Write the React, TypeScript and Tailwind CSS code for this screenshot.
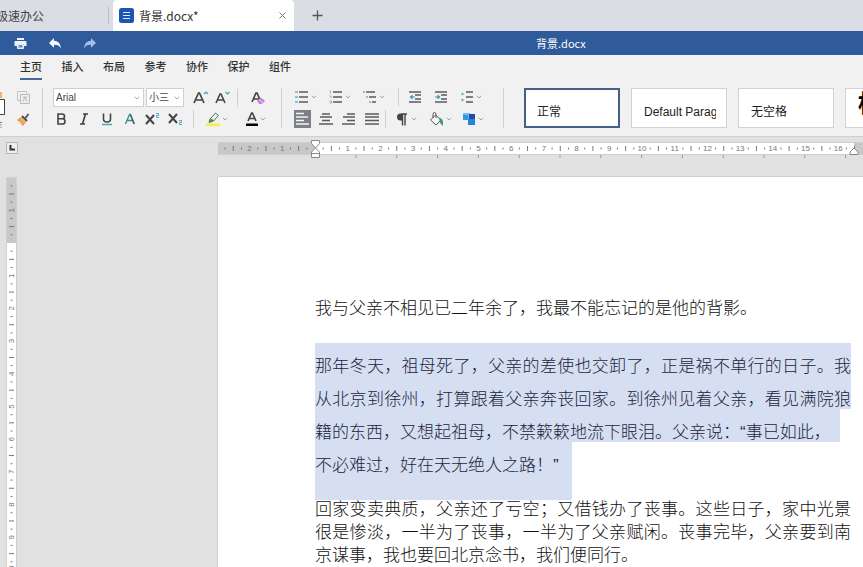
import clsx from "clsx";
import React from "react";

const CM = 32.7;

const menus = ["主页", "插入", "布局", "参考", "协作", "保护", "组件"];

const styleCards = [
  { name: "正常", active: true },
  { name: "Default Paragraph", active: false },
  { name: "无空格", active: false },
];

const Icon = ({
  w = 16,
  h = 16,
  children,
}: {
  w?: number;
  h?: number;
  children: React.ReactNode;
}) => (
  <svg width={w} height={h} viewBox={`0 0 ${w} ${h}`} fill="none" aria-hidden="true">
    {children}
  </svg>
);

const Tool = ({
  label,
  className,
  children,
}: {
  label: string;
  className?: string;
  children: React.ReactNode;
}) => (
  <button
    type="button"
    aria-label={label}
    className={clsx("flex h-[18px] shrink-0 items-center", className)}
  >
    {children}
  </button>
);

const Chevron = () => (
  <Icon w={6} h={4}>
    <path d="M.8.8 3 3 5.200.8" stroke="#a3a3a3" />
  </Icon>
);

const DropTool = ({ label, children }: { label: string; children: React.ReactNode }) => (
  <Tool label={label} className="w-[34px] gap-[2px] pl-[3px]">
    {children}
    <Chevron />
  </Tool>
);

const Divider = ({ className }: { className?: string }) => (
  <span className={clsx("w-px shrink-0 bg-[#d0d0d0]", className)} />
);

// lines: [x, y, width]
const Lines = ({
  lines,
  color = "#5a5a5a",
}: {
  lines: number[][];
  color?: string;
}) => (
  <>
    {lines.map(([x, y, w]) => (
      <path key={`${x}-${y}`} d={`M${x} ${y}h${w}`} stroke={color} strokeWidth="1.5" />
    ))}
  </>
);

const TitleTabs = () => (
  <div className="flex h-[31px] shrink-0 items-center overflow-hidden bg-[#dadde4] text-xs text-[#444]">
    <button type="button" className="-ml-1 w-28 text-left">
      极速办公
    </button>
    <span className="h-[17px] w-px bg-[#b9bcc3]" />
    <div className="ml-1 flex h-full w-[181px] items-center rounded-t bg-white pr-2 pl-[6px]">
      <Icon w={15} h={15}>
        <rect width="15" height="15" rx="2.500" fill="#1d55b4" />
        <path d="M4 4.500h7M4 7.500h7M4 10.500h7" stroke="#dfe9fb" />
      </Icon>
      <span className="ml-[5px] flex-1 text-[#333]">背景.docx*</span>
      <button type="button" aria-label="关闭">
        <Icon w={7} h={7}>
          <path d="m.5.5 6 6m0-6-6 6" stroke="#777" />
        </Icon>
      </button>
    </div>
    <button type="button" aria-label="新建" className="ml-[18px]">
      <Icon w={11} h={11}>
        <path d="M5.500.5v10M.5 5.500h10" stroke="#555" strokeWidth="1.300" />
      </Icon>
    </button>
  </div>
);

const QuickBar = () => (
  <div className="flex h-6 shrink-0 items-center bg-[#2f5b9a] pl-[14px] text-white">
    <button type="button" aria-label="打印">
      <Icon w={13} h={12}>
        <path d="M3 1h7v2H3z" fill="#eef3fb" />
        <path d="M1.500 4h10q1 0 1 1v4H10V7H3v2H.5V5q0-1 1-1Z" fill="#eef3fb" />
        <path d="M3.500 7.500h6v4h-6z" fill="#a9c0e2" stroke="#eef3fb" />
        <path d="M5 9h3" stroke="#2f5b9a" />
      </Icon>
    </button>
    <button type="button" aria-label="撤销" className="ml-[22px]">
      <Icon w={12} h={11}>
        <path d="M5 0v2.800c4 .2 6.500 2.700 7 7.700C10.500 7.800 8.500 6.800 5 6.800v3L0 4.900Z" fill="#f3f7ff" />
      </Icon>
    </button>
    <button type="button" aria-label="重做" className="ml-[23px]">
      <Icon w={12} h={11}>
        <path d="M7 0v2.800C3 3 .5 5.500 0 10.500 1.500 7.800 3.500 6.800 7 6.800v3l5-4.900Z" fill="#a9b9f0" />
      </Icon>
    </button>
    <span className="ml-[440px] text-[11px]">背景.docx</span>
  </div>
);

const MenuBar = () => (
  <nav className="ml-5 flex h-[25px] w-[271px] shrink-0 justify-between text-[11px] font-medium text-[#333]">
    {menus.map((item, i) => (
      <button
        key={item}
        type="button"
        className={clsx("whitespace-nowrap border-b-2 pt-[2px]", i === 0 ? "border-[#446995]" : "border-transparent")}
      >
        {item}
      </button>
    ))}
  </nav>
);

const ClipboardGroup = () => (
  <div className="flex w-[42px] shrink-0 justify-between">
    <button type="button" aria-label="粘贴">
      <Icon w={5} h={40}>
        <path d="M0 4h2v6H0z" fill="#f0b36e" />
        <path d="M0 11.500h4.500v15H0" fill="#fff" stroke="#444" />
        <path d="M0 34.500h2M0 37h1.500M0 40h2" stroke="#777" />
      </Icon>
    </button>
    <div className="flex flex-col justify-between pr-3">
      <Tool label="复制">
        <Icon w={13} h={13}>
          <path d="M3.500 9.500h-3v-9h9v2" stroke="#c3c3c3" />
          <path d="M3.500 3.500h9v9h-9z" fill="#ededed" stroke="#bcbcbc" />
          <path d="M6 10.500 8 6l2 4.500M6 6h4" stroke="#bcbcbc" />
        </Icon>
      </Tool>
      <Tool label="格式刷">
        <Icon w={13} h={13}>
          <path d="m0 7 4-3 5 5-3 4Z" fill="#e99a43" />
          <path d="m2 8 3 3M4 6l3.500 4" stroke="#f7d3a4" />
          <path d="m5 3 5 5" stroke="#4e4e4e" strokeWidth="2" />
          <path d="m8.500 5 3-4" stroke="#5b5b5b" strokeWidth="2" />
        </Icon>
      </Tool>
    </div>
  </div>
);

const SelectBox = ({ label, value, className }: { label: string; value: string; className: string }) => (
  <div className={clsx("relative h-[19px]", className)}>
    <select
      aria-label={label}
      defaultValue={value}
      className="block h-full w-full appearance-none border border-[#cfcfcf] bg-white pl-[2px] text-[10px] text-[#444]"
    >
      <option>{value}</option>
    </select>
    <span className="pointer-events-none absolute top-2 right-1">
      <Chevron />
    </span>
  </div>
);

const FontGroup = () => (
  <div className="ml-[10px] flex w-[228px] shrink-0 flex-col justify-between">
    <div className="flex items-center">
      <SelectBox label="字体" value="Arial" className="w-[91px]" />
      <SelectBox label="字号" value="小三" className="ml-[2px] w-[38px]" />
      <Tool label="增大字号" className="ml-[9px] w-4">
        <Icon>
          <path d="M1 13 5.500 3h1L11 13M3 10h6" stroke="#444" strokeWidth="1.700" />
          <path d="m11 4 2-2 2 2" stroke="#4a9fb8" strokeWidth="1.200" />
        </Icon>
      </Tool>
      <Tool label="减小字号" className="ml-[6px] w-4">
        <Icon>
          <path d="m1 13 4-9h1l4 9M3 10h5" stroke="#444" strokeWidth="1.600" />
          <path d="m10.500 2 2 2 2-2" stroke="#4a9fb8" strokeWidth="1.200" />
        </Icon>
      </Tool>
      <Divider className="ml-[6px] h-[18px]" />
      <Tool label="清除格式" className="ml-[13px] w-4">
        <Icon>
          <path d="m1 12 4-9h1l4 9M3 9h5" stroke="#444" strokeWidth="1.700" />
          <path d="m6 11 4-3.500 4 3.500-3 3H8Z" fill="#c884d8" />
          <path d="m8 9.500 4 3.500" stroke="#f0d8f5" />
        </Icon>
      </Tool>
    </div>
    <div className="-ml-1 flex items-center">
      <Tool label="加粗" className="w-[23px] justify-center">
        <Icon w={12} h={14}>
          <path d="M3 2h4q2.500 0 2.500 2.400T7 6.800H3zM3 6.800h4.500q2.500 0 2.500 2.600T7.500 12H3z" stroke="#444" strokeWidth="1.600" />
        </Icon>
      </Tool>
      <Tool label="倾斜" className="w-[23px] justify-center">
        <Icon w={12} h={14}>
          <path d="M5 2h5M2 12h5M7.500 2l-3 10" stroke="#444" strokeWidth="1.700" />
        </Icon>
      </Tool>
      <Tool label="下划线" className="w-[23px] justify-center">
        <Icon w={12} h={14}>
          <path d="M2.500 1.500V7q0 3 3.500 3t3.500-3V1.500" stroke="#444" strokeWidth="1.600" />
          <path d="M1 12.500h10" stroke="#4fa9b3" strokeWidth="1.500" />
        </Icon>
      </Tool>
      <Tool label="文字效果" className="w-[23px] justify-center">
        <Icon w={12} h={14}>
          <path d="m1.500 12 4-9.500h1l4 9.500M3.500 8.500h5" stroke="#3c8595" strokeWidth="1.300" />
          <path d="M6.500 3 10 12" stroke="#4b5c66" strokeWidth="1.200" />
        </Icon>
      </Tool>
      <Tool label="上标" className="w-[23px] justify-center">
        <Icon w={15} h={14}>
          <path d="m1 3 8 9M9 3l-8 9" stroke="#444" strokeWidth="2" />
          <path d="M11 1.500h2.500v2H11.500v2H14" stroke="#56a9ba" />
        </Icon>
      </Tool>
      <Tool label="下标" className="w-[23px] justify-center">
        <Icon w={15} h={14}>
          <path d="m1 2 8 9M9 2l-8 9" stroke="#444" strokeWidth="2" />
          <path d="M11 8.500h2.500v2H11.500v2H14" stroke="#56a9ba" />
        </Icon>
      </Tool>
      <Divider className="ml-[6px] h-[18px]" />
      <div className="ml-[9px] flex gap-[6px]">
        <DropTool label="突出显示">
          <Icon w={14} h={16}>
            <path d="M0 12.500h14V15H0z" fill="#f5ef3c" />
            <path d="m4 8 5.500-6 3 2.500L7.500 10 3 11.500Z" fill="#e9efe9" stroke="#55705e" />
            <path d="m3 11.500 2-4 3 2Z" fill="#4f7f5d" />
          </Icon>
        </DropTool>
        <DropTool label="字体颜色">
          <Icon w={12} h={16}>
            <path d="m2 10 3.600-8h.8l3.600 8M3.500 7.500h5" stroke="#444" strokeWidth="1.600" />
            <path d="M0 12.500h12V15H0z" fill="#000" />
          </Icon>
        </DropTool>
      </div>
    </div>
  </div>
);

const ParagraphGroup = () => (
  <div className="ml-[10px] flex w-[211px] shrink-0 flex-col justify-between">
    <div className="flex items-center">
      <DropTool label="项目符号">
        <Icon w={14} h={14}>
          <Lines lines={[[4, 2, 9], [4, 7, 9], [4, 12, 9]]} />
          <Lines lines={[[0, 2, 3], [0, 7, 3], [0, 12, 3]]} color="#5fb4c8" />
        </Icon>
      </DropTool>
      <DropTool label="编号">
        <Icon w={14} h={14}>
          <Lines lines={[[4, 2, 9], [4, 7, 9], [4, 12, 9]]} />
          <path d="M1.500.5v3M.5 6h1.500v2M.5 11h2v2h-2" stroke="#86b5c0" />
        </Icon>
      </DropTool>
      <DropTool label="多级列表">
        <Icon w={14} h={14}>
          <Lines lines={[[3, 2, 9], [6, 7, 7], [9, 12, 4]]} />
          <Lines lines={[[0, 2, 2], [3, 7, 2], [6, 12, 2]]} color="#5fb4c8" />
        </Icon>
      </DropTool>
      <Divider className="ml-1 h-[18px]" />
      <Tool label="减少缩进" className="ml-[9px] w-[14px]">
        <Icon w={14} h={14}>
          <Lines lines={[[1, 2, 12], [7, 5, 6], [7, 9, 6], [1, 12, 12]]} />
          <path d="m4.500 4.500-3 2.500 3 2.500z" fill="#3b94ab" />
          <path d="M4 7h3" stroke="#3b94ab" />
        </Icon>
      </Tool>
      <Tool label="增加缩进" className="ml-3 w-[14px]">
        <Icon w={14} h={14}>
          <Lines lines={[[1, 2, 12], [7, 5, 6], [7, 9, 6], [1, 12, 12]]} />
          <path d="m3.500 4.500 3 2.500-3 2.500z" fill="#3b94ab" />
          <path d="M1 7h3" stroke="#3b94ab" />
        </Icon>
      </Tool>
      <div className="ml-[9px] flex">
        <DropTool label="行距">
          <Icon w={14} h={14}>
            <Lines lines={[[6, 2, 7], [6, 7, 7], [6, 12, 7]]} />
            <path d="m1 5 1.500-3L4 5zM1 9l1.500 3L4 9z" fill="#5fb0c0" />
          </Icon>
        </DropTool>
      </div>
    </div>
    <div className="flex items-center">
      <Tool label="左对齐" className="ml-[2px] w-[17px] justify-center bg-[#7d8084]">
        <Icon w={15} h={16}>
          <Lines lines={[[1, 2.5, 8], [1, 6, 12], [1, 9.5, 8], [1, 13, 13]]} color="#f4f4f4" />
        </Icon>
      </Tool>
      <Tool label="居中" className="ml-2 w-[14px]">
        <Icon w={14} h={14}>
          <Lines lines={[[3, 2, 8], [1, 5, 12], [3, 8.5, 8], [0, 12, 14]]} />
        </Icon>
      </Tool>
      <Tool label="右对齐" className="ml-[9px] w-[14px]">
        <Icon w={14} h={14}>
          <Lines lines={[[5, 2, 8], [1, 5, 12], [5, 8.5, 8], [0, 12, 13]]} />
        </Icon>
      </Tool>
      <Tool label="两端对齐" className="ml-[9px] w-[14px]">
        <Icon w={14} h={14}>
          <Lines lines={[[0, 2, 14], [0, 5, 14], [0, 8.5, 14], [0, 12, 14]]} />
        </Icon>
      </Tool>
      <Divider className="ml-[6px] h-[18px]" />
      <div className="ml-[6px] flex">
        <DropTool label="段落标记">
          <Icon w={14} h={14}>
            <path d="M7 1.500H5.500a3.500 3.500 0 0 0 0 7H7z" fill="#444" />
            <path d="M6.500 2H12M7.500 1.500v12M10 1.500v12" stroke="#444" strokeWidth="1.400" />
          </Icon>
        </DropTool>
        <DropTool label="底纹">
          <Icon w={15} h={15}>
            <path d="m1.500 8 5-5 5.500 5-5 5Z" fill="#f6f6f6" stroke="#555" />
            <path d="M4 6V2.500q0-2 1.500-2T7 2.500V6" stroke="#555" />
            <path d="M10 6q4 0 4 4.500V14l-3-3Z" fill="#469485" />
          </Icon>
        </DropTool>
        <DropTool label="主题颜色">
          <Icon w={13} h={13}>
            <path d="M0 0h7v7H0z" fill="#79bdf0" />
            <path d="M0 2h5v5H0z" fill="#3198e6" />
            <path d="M6 1h6v6H6z" fill="#1a4fa3" />
            <path d="M5 6h7v6H5z" fill="#2583dd" />
          </Icon>
        </DropTool>
      </div>
    </div>
  </div>
);

const StyleGallery = () => (
  <div className="ml-5 flex min-w-0 flex-1 items-center gap-[11px] overflow-hidden">
    {styleCards.map((card) => (
      <button
        key={card.name}
        type="button"
        className={clsx(
          "h-10 w-24 shrink-0 bg-white pt-2 text-left text-xs text-[#222]",
          card.active ? "border-2 border-[#446088] px-[11px]" : "border border-[#d2d2d2] pr-[10px] pl-3"
        )}
      >
        <span className="block overflow-hidden whitespace-nowrap">{card.name}</span>
      </button>
    ))}
    <button
      type="button"
      className="h-10 w-24 shrink-0 border border-[#d2d2d2] bg-white px-3 pb-2 text-left text-2xl leading-6 font-bold text-black"
    >
      标题
    </button>
  </div>
);

// origin is the zero mark, from/to are in quarters of a unit
const marks = (origin: number, from: number, to: number) => {
  const list = [];
  for (let q = from; q <= to; q++) {
    if (q !== 0) list.push({ q, pos: origin + (q * CM) / 4 });
  }
  return list;
};

const HorizontalRuler = () => (
  <svg height="39" className="min-w-0 flex-1 overflow-hidden" aria-hidden="true">
    <rect y="4" width="100%" height="12" fill="#fff" />
    <rect y="4" width="97" height="12" fill="#c8c8c8" />
    <rect x="636" y="4" width="400" height="12" fill="#c8c8c8" />
    <path d="M0 4.500h2000M0 16.500h2000" stroke="#cdcdcd" />
    {marks(97, -11, 66).map(({ q, pos }) =>
      q % 4 === 0 ? (
        <text key={q} x={pos} y="13" textAnchor="middle" fontSize="8" fill="#777">
          {Math.abs(q / 4)}
        </text>
      ) : (
        <path key={q} d={q % 2 === 0 ? `M${pos} 8v5` : `M${pos} 9.500v2`} stroke="#777" />
      )
    )}
    {Array.from({ length: 13 }, (_, i) => (
      <path key={i} d={`M${138 + i * 40.8} 17v3`} stroke="#999" />
    ))}
    <path d="M93.500 2.500h8v3l-4 4.500-4-4.500z" fill="#fff" stroke="#888" />
    <path d="m97.500 10 4 4v5.500h-8V14zM93.500 15.500h8" fill="#fff" stroke="#888" />
    <path d="m636 10 4 4v2.500h-8V14z" fill="#fff" stroke="#888" />
    <path d="M0 38.500h2000" stroke="#cfcfcf" />
  </svg>
);

const VerticalRuler = () => (
  <svg width="11" className="ml-[6px] h-full shrink-0 overflow-hidden" aria-hidden="true">
    <rect width="11" height="100%" fill="#fff" />
    <rect width="11" height="66" fill="#c8c8c8" />
    <path d="M.5 0v2000M10.500 0v2000M0 .5h11" stroke="#d0d0d0" />
    {marks(66, -7, 80).map(({ q, pos }) =>
      q % 4 === 0 ? (
        <text key={q} transform={`translate(8 ${pos}) rotate(-90)`} textAnchor="middle" fontSize="8" fill="#777">
          {Math.abs(q / 4)}
        </text>
      ) : (
        <path key={q} d={q % 2 === 0 ? `M3 ${pos}h5` : `M4.500 ${pos}h2`} stroke="#777" />
      )
    )}
  </svg>
);

const Page = () => (
  <article className="ml-[200px] min-w-0 flex-1 border-l border-[#cfcfcf] bg-white pt-[120px] pr-3 pl-[97px] text-justify text-[17px] leading-[23px] font-light text-[#111]">
    <p>我与父亲不相见已二年余了，我最不能忘记的是他的背影。</p>
    <div className="relative mt-[23px] pt-[7px] pb-4">
      {/* selection */}
      <div className="absolute inset-x-0 top-0">
        <div className="h-[66px] bg-[#d5dff1]" />
        <div className="mr-[11px] h-[33px] bg-[#d5dff1]" />
        <div className="h-[58px] w-[257px] bg-[#d5dff1]" />
      </div>
      <p className="relative leading-[33px] text-[#1c2540]">
        那年冬天，祖母死了，父亲的差使也交卸了，正是祸不单行的日子。我从北京到徐州，打算跟着父亲奔丧回家。到徐州见着父亲，看见满院狼籍的东西，又想起祖母，不禁簌簌地流下眼泪。父亲说：“事已如此，
        <br />
        不必难过，好在天无绝人之路！”
      </p>
    </div>
    <p>
      回家变卖典质，父亲还了亏空；又借钱办了丧事。这些日子，家中光景很是惨淡，一半为了丧事，一半为了父亲赋闲。丧事完毕，父亲要到南京谋事，我也要回北京念书，我们便同行。
    </p>
  </article>
);

const App = () => {
  return (
    <div className="flex h-screen flex-col overflow-hidden bg-[#e1e1e1] font-['Liberation_Sans','Noto_Sans_CJK_SC',sans-serif]">
      <header className="shrink-0">
        <div className="font-['Noto_Sans_CJK_SC',sans-serif]">
          <TitleTabs />
          <QuickBar />
        </div>
        <div className="h-[82px] border-b border-[#d0d0d0] bg-[#f1f1f1]">
          <MenuBar />
          <div className="mt-2 flex h-10">
            <ClipboardGroup />
            <Divider className="h-10" />
            <FontGroup />
            <Divider className="h-10" />
            <ParagraphGroup />
            <Divider className="h-10" />
            <StyleGallery />
          </div>
        </div>
      </header>
      <main className="flex min-h-0 flex-1 flex-col">
        <div className="flex h-10 shrink-0 pt-px">
          <div className="w-[218px] shrink-0 pt-1 pl-[6px]">
            <button
              type="button"
              aria-label="制表位"
              className="flex size-3 items-center justify-center border border-[#b5b5b5] bg-[#eee]"
            >
              <Icon w={6} h={6}>
                <path d="M1.500 0v4.500H6" stroke="#333" strokeWidth="2" />
              </Icon>
            </button>
          </div>
          <HorizontalRuler />
        </div>
        <div className="flex min-h-0 flex-1">
          <VerticalRuler />
          <Page />
        </div>
      </main>
    </div>
  );
};

export default App;
